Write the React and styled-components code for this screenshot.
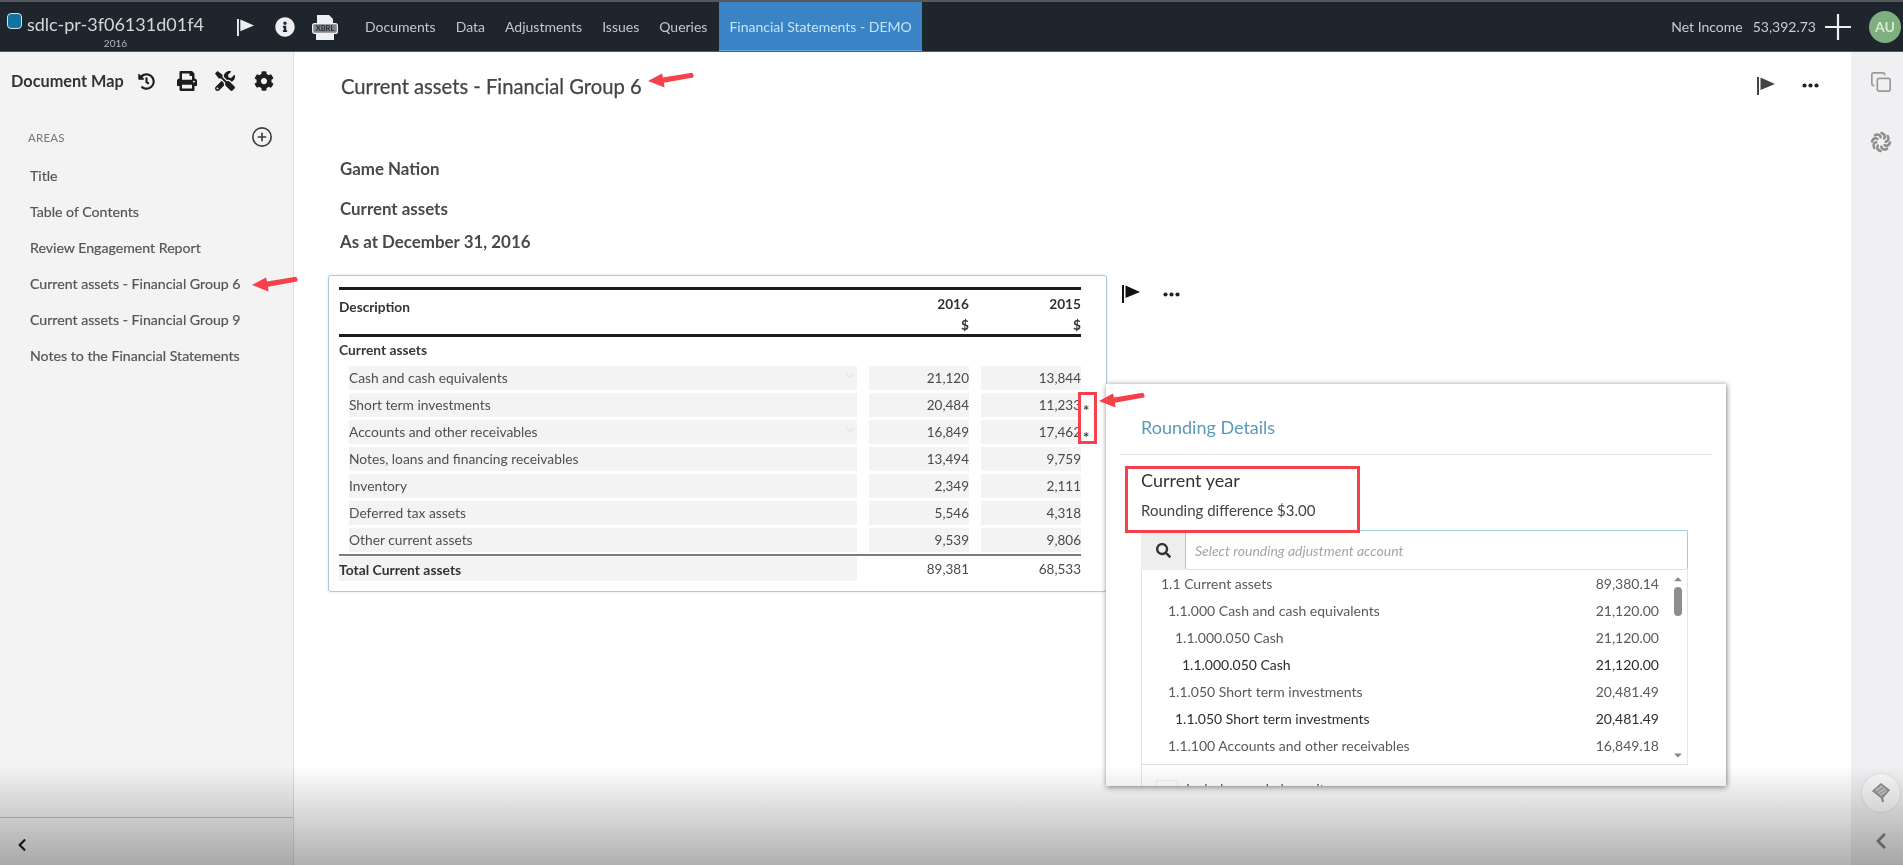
import React from 'react';
import styled, { createGlobalStyle } from 'styled-components';
import {
  FaHistory,
  FaPrint,
  FaTools,
  FaCog,
  FaInfoCircle,
  FaSearch,
  FaCaretUp,
  FaCaretDown,
  FaChevronLeft,
} from 'react-icons/fa';
import { CirclePlus, Copy, ChevronDown } from 'lucide-react';

const GlobalStyle = createGlobalStyle`
  html, body {
    margin: 0;
    height: 100%;
    overflow: hidden;
    background: #fff;
  }
  body {
    font-family: Lato, "Open Sans", sans-serif;
    color: #444;
  }
`;

const Page = styled.div`
  position: relative;
  display: flex;
  flex-direction: column;
  height: 865px;
  overflow: hidden;
  filter: blur(0.55px);
`;

const Header = styled.header`
  flex: 0 0 52px;
  box-sizing: border-box;
  display: flex;
  align-items: stretch;
  background: #1e252d;
  border-top: 2px solid #55575a;
  border-bottom: 1px solid #555b60;
  color: #c9cccf;
`;

const Brand = styled.div`
  width: 237px;
  flex: none;
  display: flex;
  padding: 11px 0 0 7px;
  box-sizing: border-box;
`;

const Logo = styled.span`
  width: 15px;
  height: 16px;
  flex: none;
  margin: 0 5px 0 0;
  box-sizing: border-box;
  border-radius: 4px;
  background: #11739f;
  border: 1px solid #d8e4ea;
`;

const BrandText = styled.div`
  display: flex;
  flex-direction: column;
  align-items: center;
`;

const BrandName = styled.div`
  font-size: 18px;
  line-height: 22px;
  color: #d4d6d8;
  white-space: nowrap;
`;

const BrandYear = styled.div`
  font-size: 10px;
  line-height: 12px;
  margin-top: 2px;
  color: #b3b6b9;
`;

const HeaderIcons = styled.div`
  display: flex;
  align-items: center;
  width: 128px;
  flex: none;
  color: #eceeef;
  padding-top: 1px;
`;

const HeaderIcon = styled.span`
  display: inline-flex;
  margin-left: ${(p) => p.$gap || 0}px;
`;

const Nav = styled.nav`
  display: flex;
  align-items: stretch;
  flex: 1;
`;

const NavItem = styled.a`
  display: flex;
  align-items: center;
  font-size: 14px;
  margin-right: 20px;
  color: #c4c7ca;
  white-space: nowrap;
`;

const ActiveNavItem = styled.a`
  display: flex;
  align-items: center;
  padding: 0 10px;
  margin-left: -8px;
  font-size: 14px;
  background: #3a84c6;
  color: #c2e4f7;
  white-space: nowrap;
  border-bottom: 1px solid #6aa9dd;
`;

const HeaderRight = styled.div`
  display: flex;
  align-items: center;
  padding-right: 2px;
  font-size: 14px;
  color: #c9cccf;
`;

const Amount = styled.span`
  margin-left: 10px;
`;

const Plus = styled.svg`
  width: 26px;
  height: 26px;
  margin-left: 9px;
`;

const Avatar = styled.span`
  width: 32px;
  height: 32px;
  margin-left: 18px;
  border-radius: 50%;
  background: #7fae7f;
  color: #d4ecd2;
  font-size: 14px;
  font-weight: 700;
  display: flex;
  align-items: center;
  justify-content: center;
`;

const Body = styled.div`
  flex: 1;
  display: flex;
  min-height: 0;
`;

const Sidebar = styled.aside`
  width: 294px;
  flex: none;
  box-sizing: border-box;
  display: flex;
  flex-direction: column;
  background: #f2f3f2;
  border-right: 1px solid #dcdddc;
`;

const SidebarTop = styled.div`
  display: flex;
  align-items: center;
  height: 56px;
  padding-left: 11px;
  color: #222;
`;

const SidebarTitle = styled.div`
  width: 131px;
  font-size: 16.3px;
  font-weight: 700;
  color: #333;
  white-space: nowrap;
`;

const ToolIcon = styled.span`
  display: inline-flex;
  width: 40px;
  padding-top: 2px;
  color: #1d1d1d;
`;

const AreasRow = styled.div`
  display: flex;
  align-items: center;
  justify-content: space-between;
  padding: 18px 20px 0 28px;
  color: #3d3f40;
`;

const AreasLabel = styled.div`
  font-size: 11.5px;
  color: #777;
  letter-spacing: 0.2px;
`;

const AreaList = styled.ul`
  list-style: none;
  margin: 10px 0 0;
  padding: 0 0 0 30px;
  flex: 1;
`;

const AreaItem = styled.li`
  height: 36px;
  line-height: 36px;
  font-size: 14.15px;
  color: #555;
  -webkit-text-stroke: 0.2px #555;
  white-space: nowrap;
`;

const SidebarBottom = styled.div`
  height: 48px;
  flex: none;
  display: flex;
  align-items: center;
  padding: 6px 0 0 15px;
  box-sizing: border-box;
  border-top: 1px solid #bdbebd;
  color: #1d1d1d;
`;

const Main = styled.main`
  position: relative;
  flex: 1;
  min-width: 0;
  padding: 0 0 0 34px;
  background: #fff;
`;

const TitleRow = styled.div`
  display: flex;
  align-items: center;
  height: 67px;
  padding: 0 32px 1px 13px;
`;

const PageTitle = styled.h1`
  flex: 1;
  margin: 0;
  font-size: 20.2px;
  font-weight: 400;
  color: #454545;
  -webkit-text-stroke: 0.25px #454545;
`;

const DotsIcon = styled.svg`
  width: 17px;
  height: 5px;
  margin-left: ${(p) => p.$gap}px;
`;

const FlagIcon = styled.svg`
  width: ${(p) => p.$size || 18}px;
  height: ${(p) => p.$size || 18}px;
`;

const DocHead = styled.div`
  padding: 33px 0 0 12px;
  font-size: 16.9px;
  font-weight: 700;
  color: #494949;
`;

const DocLine = styled.div`
  height: 32px;
  line-height: 32px;
  margin-bottom: ${(p) => p.$after || 0}px;
`;

const TableWrap = styled.div`
  display: flex;
  align-items: flex-start;
  margin-top: 17px;
`;

const Card = styled.section`
  width: 779px;
  height: 317px;
  flex: none;
  box-sizing: border-box;
  padding: 11px 25px 0 10px;
  border: 1px solid #a8cadb;
  border-radius: 3px;
  background: #fff;
  box-shadow: 0 0 3px rgba(120, 150, 170, 0.25);
`;

const HeadRow = styled.div`
  display: grid;
  grid-template-columns: 1fr 130px 112px;
  height: 50px;
  box-sizing: border-box;
  padding-top: 3px;
  border-top: 3px solid #1c1c1c;
  border-bottom: 3px solid #1c1c1c;
  font-size: 13.7px;
  font-weight: 700;
  color: #333;
`;

const HeadCell = styled.div`
  text-align: ${(p) => (p.$num ? 'right' : 'left')};
  padding-top: ${(p) => (p.$num ? 0 : 3)}px;
  line-height: 21px;
`;

const SectionRow = styled.div`
  height: 29px;
  line-height: 25px;
  font-size: 13.8px;
  font-weight: 700;
  color: #383838;
`;

const Row = styled.div`
  display: grid;
  grid-template-columns: 1fr 100px 100px;
  column-gap: 12px;
  height: 24px;
  margin-bottom: 3px;
  margin-left: 10px;
`;

const LabelCell = styled.div`
  position: relative;
  background: #f3f3f3;
  line-height: 24px;
  font-size: 13.8px;
  color: #4f4f4f;
  white-space: nowrap;
`;

const NumCell = styled.div`
  position: relative;
  background: #f3f3f3;
  line-height: 24px;
  font-size: 13.5px;
  text-align: right;
  color: #4a4a4a;
`;

const RowChevron = styled.span`
  position: absolute;
  right: 1px;
  top: 4px;
  color: #d8d8d8;
  display: inline-flex;
`;

const Star = styled.span`
  position: absolute;
  left: 100%;
  top: 5px;
  margin-left: 2px;
  font-size: 15px;
  font-weight: 700;
  color: #444;
`;

const TotalRow = styled.div`
  display: grid;
  grid-template-columns: 1fr 100px 100px;
  column-gap: 12px;
  height: 30px;
  border-top: 2px solid #7c7c7c;
  margin-top: -1px;
  box-sizing: border-box;
`;

const TotalLabel = styled.div`
  background: #f3f3f3;
  height: 24px;
  margin-top: 1px;
  line-height: 25px;
  font-size: 13.9px;
  font-weight: 700;
  color: #333;
`;

const TotalNum = styled.div`
  line-height: 27px;
  font-size: 13.5px;
  text-align: right;
  color: #4a4a4a;
`;

const SideTools = styled.div`
  display: flex;
  align-items: center;
  padding: 10px 0 0 15px;
  color: #111;
`;

const Popup = styled.aside`
  position: absolute;
  left: 812px;
  top: 332px;
  width: 620px;
  height: 402px;
  box-sizing: border-box;
  overflow: hidden;
  padding: 0 35px;
  background: #fff;
  box-shadow: 1px 0 5px rgba(0, 0, 0, 0.35), 0 3px 6px rgba(0, 0, 0, 0.2);
`;

const PopupTitle = styled.h2`
  margin: 0 -21px;
  padding: 32px 21px 0;
  height: 71px;
  box-sizing: border-box;
  font-size: 18px;
  font-weight: 400;
  color: #5b9ab9;
  border-bottom: 1px solid #e8e8e8;
`;

const YearTitle = styled.div`
  margin-top: 13px;
  font-size: 18px;
  line-height: 24px;
  color: #333;
`;

const RoundingText = styled.div`
  margin-top: 8px;
  font-size: 15px;
  line-height: 20px;
  color: #444;
`;

const SearchBox = styled.div`
  display: flex;
  height: 40px;
  margin-top: 10px;
  width: 547px;
`;

const SearchAddon = styled.div`
  width: 44px;
  flex: none;
  display: flex;
  align-items: center;
  justify-content: center;
  background: #eee;
  color: #333;
`;

const SearchInput = styled.div`
  flex: 1;
  box-sizing: border-box;
  display: flex;
  align-items: center;
  padding-left: 9px;
  border: 1px solid #a3cbe0;
  border-bottom-color: #d4e4ec;
  border-radius: 2px;
  font-size: 14px;
  font-style: italic;
  color: #a5a5a5;
`;

const ListBox = styled.div`
  position: relative;
  box-sizing: border-box;
  width: 547px;
  height: 195px;
  background: #fff;
  border: 1px solid #e4e4e4;
  border-top: 0;
  border-bottom: 1px solid #ddd;
`;

const ListRow = styled.div`
  display: flex;
  justify-content: space-between;
  height: 27px;
  line-height: 27px;
  padding: 0 28px 0 ${(p) => 19 + p.$level * 7}px;
  font-size: 14px;
  color: ${(p) => (p.$strong ? '#2e2e2e' : '#5a5a5a')};
`;

const ScrollTrack = styled.div`
  position: absolute;
  right: 2px;
  top: 3px;
  bottom: 0;
  width: 14px;
  display: flex;
  flex-direction: column;
  align-items: center;
  color: #8c8c8c;
`;

const ScrollThumb = styled.div`
  width: 8px;
  height: 29px;
  margin-top: 2px;
  border-radius: 4px;
  background: #8d8d8d;
`;

const ScrollDown = styled.span`
  position: absolute;
  bottom: 3px;
  display: inline-flex;
`;

const FooterRow = styled.div`
  display: flex;
  align-items: flex-start;
  gap: 8px;
  padding: 15px 0 0 14px;
  margin-right: -1px;
  width: 532px;
  border-left: 1px solid #e4e4e4;
  font-size: 14px;
  color: #555;
`;

const FakeCheck = styled.span`
  width: 20px;
  height: 20px;
  border: 1px solid #eee;
  flex: none;
`;

const Rail = styled.aside`
  width: 52px;
  flex: none;
  display: flex;
  flex-direction: column;
  align-items: center;
  background: #f0f0f2;
  color: #999;
  padding: 19px 0 0 7px;
  box-sizing: border-box;
`;

const RailIcon = styled.span`
  display: inline-flex;
  margin-top: ${(p) => p.$top || 0}px;
`;

const RailButton = styled.span`
  width: 38px;
  height: 38px;
  margin-top: auto;
  border-radius: 50%;
  background: #f8f8f8;
  display: flex;
  align-items: center;
  justify-content: center;
  box-shadow: 0 0 3px rgba(0, 0, 0, 0.12);
`;

const RailChevron = styled.span`
  display: inline-flex;
  margin: 20px 0 15px;
  color: #858585;
`;

const Fade = styled.div`
  position: absolute;
  left: 0;
  right: 0;
  bottom: 0;
  height: 100px;
  background: linear-gradient(to bottom, rgba(0, 0, 0, 0), rgba(0, 0, 0, 0.31));
  pointer-events: none;
`;

const RedBox = styled.div`
  position: absolute;
  left: ${(p) => p.$x}px;
  top: ${(p) => p.$y}px;
  width: ${(p) => p.$w}px;
  height: ${(p) => p.$h}px;
  box-sizing: border-box;
  border: 3px solid #f4414a;
`;

const ArrowSvg = styled.svg`
  position: absolute;
  left: ${(p) => p.$x}px;
  top: ${(p) => p.$y}px;
  width: 46px;
  height: 16px;
`;

const Arrow = ({ x, y }) => (
  <ArrowSvg $x={x} $y={y} viewBox="0 0 46 16">
    <path d="M0 9 L14 1.5 L15 5.5 L44 0.8 Q46.5 3.2 45 5.4 L16 10.8 L16.5 15.5 Z" fill="#f4414a" />
  </ArrowSvg>
);

const Flag = ({ size }) => (
  <FlagIcon $size={size} viewBox="0 0 18 18">
    <rect x="0" y="0" width="2" height="18" fill="currentColor" />
    <path d="M3.5 0.5 L18 7 L3.5 13 Z" fill="currentColor" />
  </FlagIcon>
);

const Dots = ({ gap }) => (
  <DotsIcon $gap={gap} viewBox="0 0 17 5">
    <circle cx="2.5" cy="2.5" r="2.1" fill="#222" />
    <circle cx="8.5" cy="2.5" r="2.1" fill="#222" />
    <circle cx="14.5" cy="2.5" r="2.1" fill="#222" />
  </DotsIcon>
);

const XbrlIcon = () => (
  <svg width="26" height="25" viewBox="0 0 26 25">
    <path d="M5 0 H17 L21 4 V8 H5 Z" fill="#eef0f1" />
    <path d="M4 18 H22 V25 H4 Z" fill="#eef0f1" />
    <rect x="0.6" y="8.6" width="24.8" height="9.8" rx="2" fill="#80868b" stroke="#eef0f1" strokeWidth="1.2" />
    <text x="13" y="16" textAnchor="middle" fontSize="7.5" fontWeight="700" fill="#23292f" fontFamily="Lato, sans-serif">XBRL</text>
  </svg>
);

const BladeIcon = () => (
  <svg width="22" height="22" viewBox="0 0 22 22" fill="none" stroke="#8f8f8f" strokeWidth="2.6" strokeLinecap="round">
    {[0, 45, 90, 135, 180, 225, 270, 315].map((deg) => (
      <path key={deg} transform={`rotate(${deg} 11 11)`} d="M11.5 2 C14.5 3 15.5 5 14.2 7.4" />
    ))}
  </svg>
);

const TagIcon = () => (
  <svg width="20" height="22" viewBox="0 0 20 22" fill="none" stroke="#8e8e8e" strokeWidth="1.5">
    <path d="M2 9 L10 2 L18 8 L11 16 Z" fill="#a6a6a6" />
    <path d="M5 8.5 L11.5 4 M7.5 11 L14 6.5 M9.5 13 L15.5 9" stroke="#d2d2d2" strokeWidth="1.2" />
    <path d="M11 16 L12 20" strokeWidth="2" />
  </svg>
);

const areas = [
  'Title',
  'Table of Contents',
  'Review Engagement Report',
  'Current assets - Financial Group 6',
  'Current assets - Financial Group 9',
  'Notes to the Financial Statements',
];

const rows = [
  { label: 'Cash and cash equivalents', a: '21,120', b: '13,844', chevron: true },
  { label: 'Short term investments', a: '20,484', b: '11,233', star: true },
  { label: 'Accounts and other receivables', a: '16,849', b: '17,462', star: true, chevron: true },
  { label: 'Notes, loans and financing receivables', a: '13,494', b: '9,759' },
  { label: 'Inventory', a: '2,349', b: '2,111' },
  { label: 'Deferred tax assets', a: '5,546', b: '4,318' },
  { label: 'Other current assets', a: '9,539', b: '9,806' },
];

const accounts = [
  { level: 0, name: '1.1 Current assets', value: '89,380.14' },
  { level: 1, name: '1.1.000 Cash and cash equivalents', value: '21,120.00' },
  { level: 2, name: '1.1.000.050 Cash', value: '21,120.00' },
  { level: 3, name: '1.1.000.050 Cash', value: '21,120.00', strong: true },
  { level: 1, name: '1.1.050 Short term investments', value: '20,481.49' },
  { level: 2, name: '1.1.050 Short term investments', value: '20,481.49', strong: true },
  { level: 1, name: '1.1.100 Accounts and other receivables', value: '16,849.18' },
];

export default function App() {
  return (
    <Page>
      <GlobalStyle />
      <Header>
        <Brand>
          <Logo />
          <BrandText>
            <BrandName>sdlc-pr-3f06131d01f4</BrandName>
            <BrandYear>2016</BrandYear>
          </BrandText>
        </Brand>
        <HeaderIcons>
          <Flag size={17} />
          <HeaderIcon $gap={21}><FaInfoCircle size={20} /></HeaderIcon>
          <HeaderIcon $gap={17}><XbrlIcon /></HeaderIcon>
        </HeaderIcons>
        <Nav>
          <NavItem>Documents</NavItem>
          <NavItem>Data</NavItem>
          <NavItem>Adjustments</NavItem>
          <NavItem>Issues</NavItem>
          <NavItem>Queries</NavItem>
          <ActiveNavItem>Financial Statements - DEMO</ActiveNavItem>
        </Nav>
        <HeaderRight>
          Net Income
          <Amount>53,392.73</Amount>
          <Plus viewBox="0 0 26 26">
            <path d="M13 0 V26 M0 13 H26" stroke="#eceeef" strokeWidth="2.2" />
          </Plus>
          <Avatar>AU</Avatar>
        </HeaderRight>
      </Header>
      <Body>
        <Sidebar>
          <SidebarTop>
            <SidebarTitle>Document Map</SidebarTitle>
            <ToolIcon><FaHistory size={17} /></ToolIcon>
            <ToolIcon><FaPrint size={20} /></ToolIcon>
            <ToolIcon><FaTools size={20} /></ToolIcon>
            <ToolIcon><FaCog size={20} /></ToolIcon>
          </SidebarTop>
          <AreasRow>
            <AreasLabel>AREAS</AreasLabel>
            <CirclePlus size={22} strokeWidth={1.8} />
          </AreasRow>
          <AreaList>
            {areas.map((a) => (
              <AreaItem key={a}>{a}</AreaItem>
            ))}
          </AreaList>
          <SidebarBottom>
            <FaChevronLeft size={14} />
          </SidebarBottom>
        </Sidebar>
        <Main>
          <TitleRow>
            <PageTitle>Current assets - Financial Group 6</PageTitle>
            <Flag size={18} />
            <Dots gap={27} />
          </TitleRow>
          <DocHead>
            <DocLine $after={8}>Game Nation</DocLine>
            <DocLine $after={1}>Current assets</DocLine>
            <DocLine>As at December 31, 2016</DocLine>
          </DocHead>
          <TableWrap>
            <Card>
              <HeadRow>
                <HeadCell>Description</HeadCell>
                <HeadCell $num>2016<br />$</HeadCell>
                <HeadCell $num>2015<br />$</HeadCell>
              </HeadRow>
              <SectionRow>Current assets</SectionRow>
              {rows.map((r) => (
                <Row key={r.label}>
                  <LabelCell>
                    {r.label}
                    {r.chevron && <RowChevron><ChevronDown size={12} /></RowChevron>}
                  </LabelCell>
                  <NumCell>{r.a}</NumCell>
                  <NumCell>
                    {r.b}
                    {r.star && <Star>*</Star>}
                  </NumCell>
                </Row>
              ))}
              <TotalRow>
                <TotalLabel>Total Current assets</TotalLabel>
                <TotalNum>89,381</TotalNum>
                <TotalNum>68,533</TotalNum>
              </TotalRow>
            </Card>
            <SideTools>
              <Flag size={18} />
              <Dots gap={23} />
            </SideTools>
          </TableWrap>
          <Popup>
            <PopupTitle>Rounding Details</PopupTitle>
            <YearTitle>Current year</YearTitle>
            <RoundingText>Rounding difference $3.00</RoundingText>
            <SearchBox>
              <SearchAddon><FaSearch size={15} /></SearchAddon>
              <SearchInput>Select rounding adjustment account</SearchInput>
            </SearchBox>
            <ListBox>
              {accounts.map((a, i) => (
                <ListRow key={i} $level={a.level} $strong={a.strong}>
                  <span>{a.name}</span>
                  <span>{a.value}</span>
                </ListRow>
              ))}
              <ScrollTrack>
                <FaCaretUp size={12} />
                <ScrollThumb />
                <ScrollDown><FaCaretDown size={12} /></ScrollDown>
              </ScrollTrack>
            </ListBox>
            <FooterRow>
              <FakeCheck />
              Include zero-balance items
            </FooterRow>
          </Popup>
        </Main>
        <Rail>
          <RailIcon><Copy size={22} strokeWidth={1.8} /></RailIcon>
          <RailIcon $top={38}><BladeIcon /></RailIcon>
          <RailButton><TagIcon /></RailButton>
          <RailChevron><FaChevronLeft size={18} /></RailChevron>
        </Rail>
      </Body>
      <Fade />
      <RedBox $x={1078} $y={392} $w={19} $h={52} />
      <RedBox $x={1125} $y={466} $w={235} $h={67} />
      <Arrow x={648} y={72} />
      <Arrow x={252} y={276} />
      <Arrow x={1099} y={392} />
    </Page>
  );
}
